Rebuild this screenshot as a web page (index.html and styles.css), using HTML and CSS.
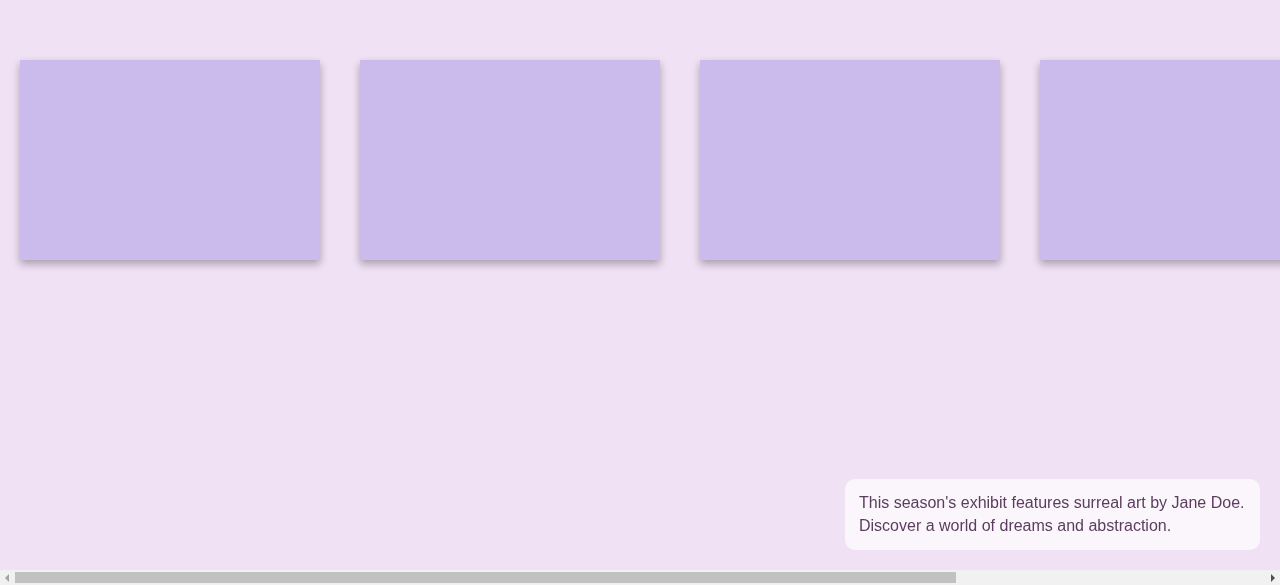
FILE: index.html
```html
<!DOCTYPE html>
<html lang="en">
<head>
<meta charset="utf-8">
<title>Exhibit</title>
<link rel="stylesheet" href="styles.css">
</head>
<body>
<main class="gallery">
  <div class="card"></div>
  <div class="card"></div>
  <div class="card"></div>
  <div class="card"></div>
  <div class="card"></div>
</main>
<aside class="info">This season's exhibit features surreal art by Jane Doe. Discover a world of dreams and abstraction.</aside>
<div class="hscroll" aria-hidden="true">
  <span class="hscroll-btn"><span class="arrow arrow-left"></span></span>
  <span class="hscroll-track"><span class="hscroll-thumb"></span></span>
  <span class="hscroll-btn"><span class="arrow arrow-right"></span></span>
</div>
</body>
</html>
```

FILE: styles.css
```css
html, body {
  margin: 0;
  padding: 0;
  height: 100%;
  overflow: hidden;
  background: #f0e1f4;
  font-family: "Liberation Sans", Arial, sans-serif;
}
.gallery {
  box-sizing: border-box;
  height: calc(100vh - 15px);
  display: flex;
  align-items: flex-start;
  gap: 40px;
  padding: 60px 20px;
  overflow-x: auto;
  overflow-y: hidden;
}
.card {
  flex: 0 0 auto;
  width: 300px;
  height: 200px;
  background: #cbbbed;
  box-shadow: 0 4px 8px rgba(0, 0, 0, 0.3);
}
.info {
  position: fixed;
  right: 20px;
  bottom: 35px;
  width: 387px;
  padding: 12px 14px 13px;
  background: rgba(255, 255, 255, 0.7);
  border-radius: 10px;
  color: #5b3c5e;
  font-size: 16px;
  line-height: 23px;
}
.hscroll {
  position: fixed;
  left: 0;
  right: 0;
  bottom: 0;
  height: 15px;
  display: flex;
  background: #f1f1f1;
}
.hscroll-btn {
  flex: 0 0 15px;
  display: flex;
  align-items: center;
  justify-content: center;
}
.hscroll-track {
  flex: 1;
  display: flex;
  align-items: center;
}
.hscroll-thumb {
  width: 75.3%;
  height: 11px;
  background: #c1c1c1;
}
.arrow {
  width: 0;
  height: 0;
  border-top: 4px solid transparent;
  border-bottom: 4px solid transparent;
}
.arrow-left {
  border-right: 4px solid #a3a3a3;
  margin-right: 2px;
}
.arrow-right {
  border-left: 4px solid #505050;
  margin-left: 1px;
}
```
